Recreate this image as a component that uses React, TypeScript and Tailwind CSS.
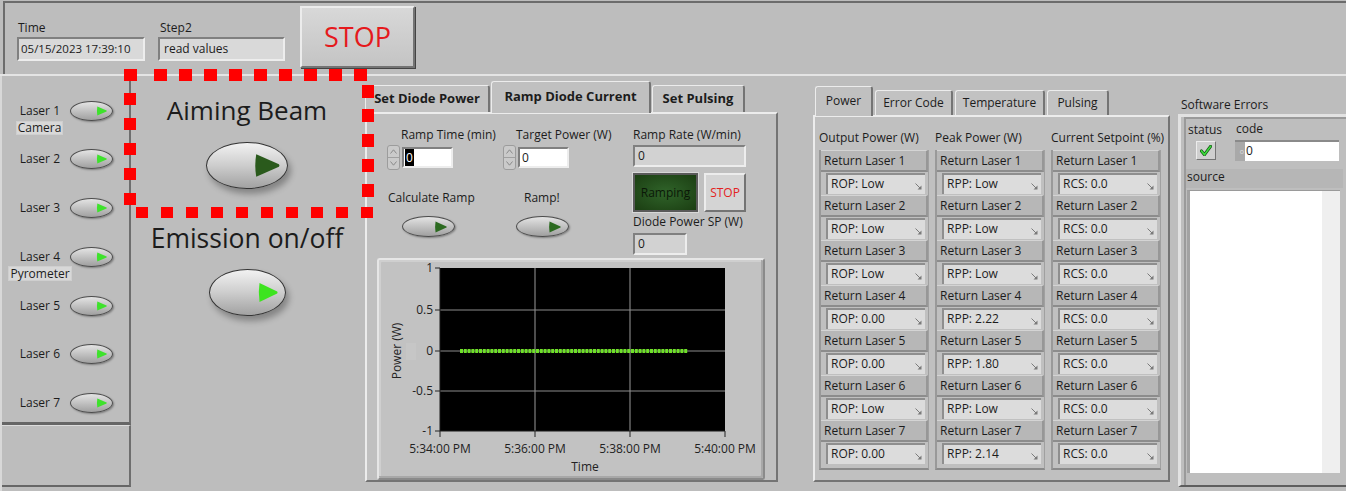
import React from "react";

const raised =
  "border-t-[#ececec] border-l-[#ececec] border-r-[#747474] border-b-[#747474]";
const sunken =
  "border-t-[#808080] border-l-[#808080] border-r-[#ededed] border-b-[#ededed]";

function Tri({ w, h, color }: { w: number; h: number; color: string }) {
  return (
    <svg width={w} height={h} viewBox="0 0 10 10" preserveAspectRatio="none">
      <path d="M1.2 0.5 Q0.5 5 1.2 9.5 L9.6 5.5 Q10 5 9.6 4.5 Z" fill={color} />
    </svg>
  );
}

function Led({ on = true, wide = false }: { on?: boolean; wide?: boolean }) {
  return (
    <div
      className={`${wide ? "w-[53px] h-[21px] pr-[7px]" : "w-[43px] h-[20px] pr-[5px]"} rounded-[50%] border border-[#4c4c4c] bg-linear-to-b from-[#e4e4e4] to-[#a0a0a0] shadow-[1px_1px_2px_rgba(0,0,0,0.35)] flex items-center justify-end`}
    >
      {wide ? <Tri w={13} h={12} color="#2c6a20" /> : <Tri w={11} h={10} color={on ? "#3ee22c" : "#2c6a20"} />}
    </div>
  );
}

function BigButton({ lit }: { lit: boolean }) {
  return (
    <div
      className={`${lit ? "w-[77px] h-[47px]" : "w-[82px] h-[47px]"} rounded-[50%] border border-[#343434] bg-linear-to-b from-[#f2f2f2] via-[#cdcdcd] to-[#a2a2a2] shadow-[3px_5px_6px_rgba(0,0,0,0.3)] flex items-center justify-end pr-[7px]`}
    >
      {lit ? <Tri w={21} h={21} color="#3de41f" /> : <Tri w={27} h={25} color="#2a5a1c" />}
    </div>
  );
}

function Spinner() {
  return (
    <div className="w-[13px] h-[25px] flex flex-col rounded-[3px] bg-[#cacaca] border border-[#9c9c9c]">
      <div className="flex-1 flex items-center justify-center border-b border-[#a0a0a0]">
        <svg width="7" height="5" viewBox="0 0 7 5">
          <path d="M0.5 4.5 L3.5 0.8 L6.5 4.5" fill="none" stroke="#8a8a8a" strokeWidth="1" />
        </svg>
      </div>
      <div className="flex-1 flex items-center justify-center">
        <svg width="7" height="5" viewBox="0 0 7 5">
          <path d="M0.5 0.5 L3.5 4.2 L6.5 0.5" fill="none" stroke="#8a8a8a" strokeWidth="1" />
        </svg>
      </div>
    </div>
  );
}

function Arrow() {
  return (
    <svg width="7" height="7" viewBox="0 0 7 7" className="mt-[8px]">
      <path d="M0.5 0.5 L6 6" stroke="#7a7a7a" strokeWidth="1" />
      <path d="M6.5 2.5 L6.5 6.5 L2.5 6.5 Z" fill="#7a7a7a" />
    </svg>
  );
}

function ReturnCell({ n, value }: { n: number; value: string }) {
  return (
    <div className="flex flex-col">
      <div className="h-[22px] bg-[#b7b7b7] border-t border-t-[#d4d4d4] border-b-2 border-b-[#8c8c8c] border-r-2 border-r-[#979797] pl-[3px] text-[12px] leading-[19px]">
        Return Laser {n}
      </div>
      <div className="mt-[1px] mb-[1px] ml-[5px] mr-[3px] h-[21px] bg-[#dcdcdc] border-l-2 border-t-2 border-l-[#8e8e8e] border-t-[#8e8e8e] flex items-start justify-between pl-[3px] pr-[3px] text-[12px] leading-[18px]">
        <span>{value}</span>
        <Arrow />
      </div>
    </div>
  );
}

function Column({ title, values, prefix }: { title: string; values: string[]; prefix: string }) {
  return (
    <div className="w-[110px] flex flex-col">
      <div className="h-[16px] text-[12px] leading-[16px] whitespace-nowrap">{title}</div>
      <div className="mt-[4px] h-[320px] border-l-2 border-l-[#999] border-b-2 border-b-[#8a8a8a] border-r border-r-[#a0a0a0] pb-[4px]">
        {values.map((v, i) => (
          <ReturnCell key={i} n={i + 1} value={`${prefix}: ${v}`} />
        ))}
      </div>
    </div>
  );
}

function Chart() {
  const gx = [61, 156, 251, 346];
  const gy = [8, 50, 91, 131, 171];
  const xl = ["5:34:00 PM", "5:36:00 PM", "5:38:00 PM", "5:40:00 PM"];
  const yl = ["1", "0.5", "0", "-0.5", "-1"];
  return (
    <svg width="384" height="218" viewBox="0 0 384 218" className="text-[12px]">
      <rect x="61" y="8" width="285" height="163" fill="#000" />
      {gx.slice(1, 3).map((x) => (
        <line key={x} x1={x} y1="8" x2={x} y2="171" stroke="#9a9a9a" strokeWidth="1" />
      ))}
      {gy.slice(1, 4).map((y) => (
        <line key={y} x1="61" y1={y} x2="346" y2={y} stroke="#8c8c8c" strokeWidth="1" />
      ))}
      <line x1="81" y1="91" x2="309" y2="91" stroke="#6fe02a" strokeWidth="4" strokeDasharray="3 0.8" />
      <line x1="61" y1="8" x2="61" y2="171" stroke="#1a1a1a" />
      <line x1="61" y1="171" x2="346" y2="171" stroke="#1a1a1a" />
      {gy.map((y, i) => (
        <g key={y}>
          <line x1="56" y1={y} x2="61" y2={y} stroke="#222" />
          <text x="54" y={y + 4} textAnchor="end" fill="#222">
            {yl[i]}
          </text>
        </g>
      ))}
      {gx.map((x, i) => (
        <g key={x}>
          <line x1={x} y1="171" x2={x} y2="177" stroke="#222" />
          <text x={x} y="193" textAnchor="middle" fill="#222">
            {xl[i]}
          </text>
        </g>
      ))}
      <text x="206" y="211" textAnchor="middle" fill="#222">
        Time
      </text>
      <text x="22" y="91" textAnchor="middle" fill="#222" transform="rotate(-90 22 91)">
        Power (W)
      </text>
      <rect x="27" y="83" width="10" height="17" fill="#c6c6c6" />
    </svg>
  );
}

function DottedBox() {
  const top = [124, 154, 179, 204, 229, 254, 279, 304, 329, 354];
  const left = [93, 118, 143, 168, 193];
  const bottom = [136, 161, 186, 211, 236, 261, 286, 311, 336, 361];
  const right = [85, 109, 134, 159, 184];
  return (
    <svg width="1346" height="491" className="absolute left-0 top-0 pointer-events-none">
      {top.map((x) => (
        <rect key={"t" + x} x={x} y="69" width="13" height="12" fill="#ff0000" />
      ))}
      {left.map((y) => (
        <rect key={"l" + y} x="124" y={y} width="12" height="12" fill="#ff0000" />
      ))}
      {bottom.map((x) => (
        <rect key={"b" + x} x={x} y="207" width="12" height="11" fill="#ff0000" />
      ))}
      {right.map((y) => (
        <rect key={"r" + y} x="362" y={y} width="12" height="13" fill="#ff0000" />
      ))}
    </svg>
  );
}

const lasers = [
  { n: 1, mt: "mt-[25px]", tag: "Camera" },
  { n: 2, mt: "mt-[14px]" },
  { n: 3, mt: "mt-[29px]" },
  { n: 4, mt: "mt-[29px]", tag: "Pyrometer" },
  { n: 5, mt: "mt-[15px]" },
  { n: 6, mt: "mt-[28px]" },
  { n: 7, mt: "mt-[29px]" },
];

export default function App() {
  return (
    <div className="relative w-[1346px] h-[491px] overflow-hidden bg-[#bdbdbd] text-[#1c1c1c] font-['Open_Sans',sans-serif]">
      {/* top strip */}
      <div className="h-[74px] pl-[3px] pt-[1px]">
        <div className="h-full border-l-2 border-t-2 border-[#6c6c6c] flex items-start">
          <div className="ml-[12px] mt-[17px] flex flex-col">
            <span className="text-[12px] leading-[16px] pl-[1px]">Time</span>
            <div className={`mt-[1px] w-[128px] h-[24px] bg-[#d9d9d9] border-2 ${sunken} pl-[2px] text-[11.5px] leading-[19px]`}>
              05/15/2023 17:39:10
            </div>
          </div>
          <div className="ml-[13px] mt-[17px] flex flex-col">
            <span className="text-[12px] leading-[16px] pl-[2px]">Step2</span>
            <div className={`mt-[1px] w-[127px] h-[24px] bg-[#d9d9d9] border-2 ${sunken} pl-[4px] text-[12px] leading-[19px]`}>
              read values
            </div>
          </div>
          <div className={`ml-[15px] mt-[3px] w-[115px] h-[62px] bg-linear-to-b from-[#d8d8d8] to-[#c4c4c4] border-2 ${raised} shadow-[1px_1px_0_#444] flex items-center justify-center text-[27px] text-[#e5191c]`}>
            STOP
          </div>
        </div>
      </div>
      <div className="h-[2px] bg-[#e4e4e4]" />

      {/* main row */}
      <div className="flex h-[415px]">
        {/* lasers */}
        <div className="w-[131px] flex flex-col border-l-2 border-l-[#d8d8d8]">
          <div className="h-[349px] border-r-2 border-r-[#6e6e6e] border-b-[3px] border-b-[#666] flex flex-col">
            {lasers.map((l) => (
              <div key={l.n} className={`${l.mt} flex flex-col`}>
                <div className="flex items-center h-[20px]">
                  <span className="w-[58px] text-right text-[12px] leading-[16px]">Laser {l.n}</span>
                  <div className="ml-[10px]">
                    <Led />
                  </div>
                </div>
                {l.tag === "Camera" && (
                  <div className="ml-[14px] w-[47px] h-[14px] bg-[#d8d8d8] border border-[#cfcfcf] text-[12px] leading-[12px] text-center">
                    Camera
                  </div>
                )}
                {l.tag === "Pyrometer" && (
                  <div className="-mt-[1px] ml-[6px] w-[64px] h-[15px] bg-[#d8d8d8] border border-[#cfcfcf] text-[12px] leading-[13px] text-center">
                    Pyrometer
                  </div>
                )}
              </div>
            ))}
          </div>
          <div className="h-[62px] border-t border-t-[#dcdcdc] border-r-2 border-r-[#6e6e6e] border-b-2 border-b-[#666]" />
        </div>

        {/* aiming column */}
        <div className="w-[234px] flex flex-col items-center pr-[2px]">
          <div className="mt-[18px] text-[26px] leading-[32px] whitespace-nowrap">Aiming Beam</div>
          <div className="mt-[16px]">
            <BigButton lit={false} />
          </div>
          <div className="mt-[33px] text-[26.5px] leading-[32px] whitespace-nowrap">Emission on/off</div>
          <div className="mt-[15px]">
            <BigButton lit />
          </div>
        </div>

        {/* middle tabs */}
        <div className="w-[413px] flex flex-col pt-[5px]">
          <div className="h-[31px] flex items-end text-[13px] font-bold">
            <div className={`w-[125px] h-[27px] bg-[#c2c2c2] border-t border-l border-r-2 ${raised} rounded-t-[3px] flex items-center justify-center`}>
              Set Diode Power
            </div>
            <div className={`ml-[1px] w-[160px] h-[32px] -mb-[1px] z-10 bg-[#c0c0c0] border-t border-l border-r-2 ${raised} rounded-t-[3px] flex items-start justify-center pt-[5px]`}>
              Ramp Diode Current
            </div>
            <div className={`ml-[1px] w-[93px] h-[27px] bg-[#c2c2c2] border-t border-l border-r-2 ${raised} rounded-t-[3px] flex items-center justify-center`}>
              Set Pulsing
            </div>
          </div>
          <div className={`h-[370px] bg-[#c0c0c0] border-2 ${raised} flex flex-col`}>
            <div className="h-[142px] flex text-[12px] leading-[16px]">
              <div className="ml-[20px] w-[113px] flex flex-col">
                <span className="mt-[13px] pl-[14px] whitespace-nowrap">Ramp Time (min)</span>
                <div className="mt-[2px] flex items-start">
                  <Spinner />
                  <div className={`ml-[2px] mt-[2px] w-[51px] h-[21px] bg-white border-2 ${sunken} pl-[1px] leading-[17px]`}>
                    <span className="bg-black text-white px-[1px]">0</span>
                  </div>
                </div>
                <span className="mt-[20px] pl-[1px] whitespace-nowrap">Calculate Ramp</span>
                <div className="mt-[10px] ml-[15px]">
                  <Led wide />
                </div>
              </div>
              <div className="ml-[3px] w-[130px] flex flex-col">
                <span className="mt-[13px] pl-[13px] whitespace-nowrap">Target Power (W)</span>
                <div className="mt-[2px] flex items-start">
                  <Spinner />
                  <div className={`ml-[2px] mt-[2px] w-[51px] h-[21px] bg-white border-2 ${sunken} pl-[2px] leading-[17px]`}>
                    0
                  </div>
                </div>
                <span className="mt-[20px] pl-[21px]">Ramp!</span>
                <div className="mt-[10px] ml-[13px]">
                  <Led wide />
                </div>
              </div>
              <div className="w-[115px] flex flex-col">
                <span className="mt-[13px] whitespace-nowrap">Ramp Rate (W/min)</span>
                <div className={`mt-[2px] w-[113px] h-[22px] bg-[#d2d2d2] border-2 ${sunken} pl-[3px] leading-[18px]`}>0</div>
                <div className="mt-[6px] flex">
                  <div className="w-[65px] h-[39px] border-2 border-[#5a5a5a] bg-[radial-gradient(ellipse_at_center,#30642a,#1b3e12)] shadow-[0_0_0_1px_#d8d8d8] flex items-center justify-center text-[#0b1808]">
                    Ramping
                  </div>
                  <div className={`ml-[6px] w-[42px] h-[39px] bg-[#d4d4d4] border-2 ${raised} flex items-center justify-center text-[#e32222]`}>
                    STOP
                  </div>
                </div>
                <span className="mt-[2px] whitespace-nowrap">Diode Power SP (W)</span>
                <div className={`mt-[3px] w-[54px] h-[22px] bg-[#d2d2d2] border-2 ${sunken} pl-[3px] leading-[18px]`}>0</div>
              </div>
            </div>
            <div className="ml-[10px] mt-[2px] w-[388px] h-[222px] border-2 border-t-[#e6e6e6] border-l-[#e6e6e6] border-r-[#8a8a8a] border-b-[#8a8a8a] rounded-[3px] shadow-[inset_-2px_-2px_0_#a8a8a8,inset_2px_2px_0_#cfcfcf] bg-[#c2c2c2]">
              <Chart />
            </div>
          </div>
        </div>

        <div className="w-[35px]" />

        {/* right tabs */}
        <div className="w-[357px] flex flex-col pt-[10px]">
          <div className="h-[29px] flex items-end text-[12px] pl-[2px]">
            <div className={`w-[58px] h-[30px] -mb-[1px] z-10 bg-[#c0c0c0] border-t border-l border-r-2 ${raised} rounded-t-[3px] flex justify-center pt-[5px]`}>
              Power
            </div>
            <div className={`ml-[2px] w-[78px] h-[25px] bg-[#c2c2c2] border-t border-l border-r-2 ${raised} rounded-t-[3px] flex items-center justify-center`}>
              Error Code
            </div>
            <div className={`ml-[2px] w-[90px] h-[25px] bg-[#c2c2c2] border-t border-l border-r-2 ${raised} rounded-t-[3px] flex items-center justify-center`}>
              Temperature
            </div>
            <div className={`ml-[2px] w-[62px] h-[25px] bg-[#c2c2c2] border-t border-l border-r-2 ${raised} rounded-t-[3px] flex items-center justify-center`}>
              Pulsing
            </div>
          </div>
          <div className={`h-[367px] bg-[#c0c0c0] border-2 ${raised} flex gap-[6px] pl-[4px] pt-[13px]`}>
            <Column title="Output Power (W)" prefix="ROP" values={["Low", "Low", "Low", "0.00", "0.00", "Low", "0.00"]} />
            <Column title="Peak Power (W)" prefix="RPP" values={["Low", "Low", "Low", "2.22", "1.80", "Low", "2.14"]} />
            <Column title="Current Setpoint (%)" prefix="RCS" values={["0.0", "0.0", "0.0", "0.0", "0.0", "0.0", "0.0"]} />
          </div>
        </div>

        <div className="w-[8px]" />

        {/* software errors */}
        <div className="w-[168px] flex flex-col">
          <span className="mt-[21px] pl-[3px] text-[12px] leading-[16px]">Software Errors</span>
          <div className="mt-[1px] h-[373px] border-l-[3px] border-l-[#e2e2e2] border-t-[3px] border-t-[#e2e2e2] border-b-2 border-b-[#5e5e5e] bg-[#bebebe] flex flex-col">
            <div className="flex-1 ml-[3px] border-l-2 border-l-[#9a9a9a] border-t-2 border-t-[#9a9a9a] flex flex-col">
              <div className="flex text-[12px] leading-[16px]">
                <div className="w-[49px] flex flex-col pl-[2px]">
                  <span className="mt-[3px]">status</span>
                  <div className={`mt-[3px] ml-[8px] w-[20px] h-[19px] bg-[#cfcfcf] border ${raised} flex items-center justify-center`}>
                    <svg width="12" height="11" viewBox="0 0 13 12">
                      <path d="M1.5 6.5 L4.8 10.5 L11.5 1.5" fill="none" stroke="#145a14" strokeWidth="3.4" strokeLinecap="round" />
                      <path d="M1.5 6.5 L4.8 10.5 L11.5 1.5" fill="none" stroke="#3ddc3d" strokeWidth="1.8" strokeLinecap="round" />
                    </svg>
                  </div>
                </div>
                <div className="flex flex-col">
                  <span className="mt-[2px] pl-[1px]">code</span>
                  <div className="mt-[3px] flex w-[104px] h-[21px] border-t-2 border-t-[#8a8a8a]">
                    <div className="w-[10px] bg-[#a9a9a9] flex items-center justify-end pr-[1px]">
                      <span className="text-[7px] leading-[7px] text-[#ddd]">o</span>
                    </div>
                    <div className="flex-1 bg-white pl-[1px] leading-[18px]">0</div>
                  </div>
                </div>
              </div>
              <div className="mt-[8px] mr-[3px] h-[19px] bg-[#b6b6b6] text-[12px] leading-[16px] pl-[1px]">source</div>
              <div className="mt-[2px] ml-[1px] mr-[6px] h-[283px] border-l-[3px] border-l-[#a2a2a2] border-t border-t-[#9a9a9a] bg-white flex justify-end">
                <div className="w-[18px] bg-[#efefef]" />
              </div>
            </div>
          </div>
        </div>
      </div>

      <DottedBox />
    </div>
  );
}
